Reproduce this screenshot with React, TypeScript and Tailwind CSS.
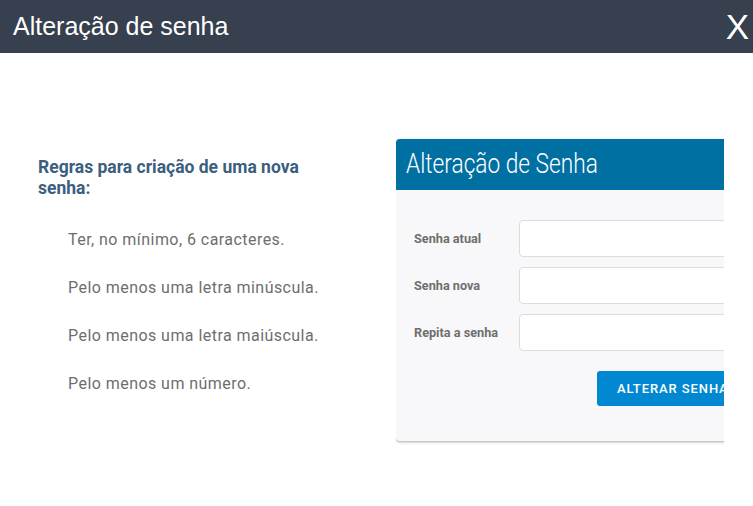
const rules = [
  "Ter, no mínimo, 6 caracteres.",
  "Pelo menos uma letra minúscula.",
  "Pelo menos uma letra maiúscula.",
  "Pelo menos um número.",
];

const fields = ["Senha atual", "Senha nova", "Repita a senha"];

export default function App() {
  return (
    <div className="w-[753px] h-[506px] bg-white overflow-hidden">
      {/* Modal header */}
      <div className="h-[53px] bg-[#37404f] flex items-center justify-between pl-[13px] pr-[4px]">
        <h1 className="text-white text-[25px] font-['Liberation_Sans',Arial,sans-serif] leading-none">
          Alteração de senha
        </h1>
        <button className="text-white text-[35px] font-['Liberation_Sans',Arial,sans-serif] leading-none">
          X
        </button>
      </div>

      <div className="flex font-['Roboto',sans-serif]">
        {/* Rules */}
        <div className="w-[396px] flex-none pl-[38px] pt-[104px]">
          <h2 className="w-[275px] text-[17.5px] leading-[21px] font-bold text-[#3b5e7e]">
            Regras para criação de uma nova senha:
          </h2>
          <ul className="mt-[31px] pl-[30px] flex flex-col gap-[28px]">
            {rules.map((r) => (
              <li key={r} className="text-[16px] leading-[20px] tracking-[0.45px] text-[#6e6e6e]">
                {r}
              </li>
            ))}
          </ul>
        </div>

        {/* Form card, clipped on the right */}
        <div className="w-[328px] flex-none overflow-hidden pt-[86px] pb-[6px]">
          <div className="w-[420px] rounded-[4px] bg-[#f8f8fa] shadow-[0_1px_3px_rgba(0,0,0,0.35)] overflow-hidden">
            <div className="h-[51px] bg-[#0070a3] flex items-center pl-[10px]">
              <span className="origin-left scale-x-[0.84] inline-block text-white text-[27px] font-light leading-none whitespace-nowrap">
                Alteração de Senha
              </span>
            </div>
            <div className="pt-[30px] pb-[35px] pl-[18px] pr-[14px]">
              <div className="flex flex-col gap-[10px]">
                {fields.map((f) => (
                  <div key={f} className="flex items-center">
                    <label className="w-[105px] flex-none text-[12.7px] font-bold text-[#6f6f6f]">{f}</label>
                    <input
                      type="password"
                      className="flex-1 h-[37px] bg-white border border-[#dcdcdc] rounded-[4px]"
                    />
                  </div>
                ))}
              </div>
              <div className="pl-[183px] pt-[20px]">
                <button className="h-[35px] px-[20px] rounded-[3px] bg-[#0288d1] text-white text-[13px] font-medium tracking-[0.9px] whitespace-nowrap">
                  ALTERAR SENHA
                </button>
              </div>
            </div>
          </div>
        </div>
      </div>
    </div>
  );
}
